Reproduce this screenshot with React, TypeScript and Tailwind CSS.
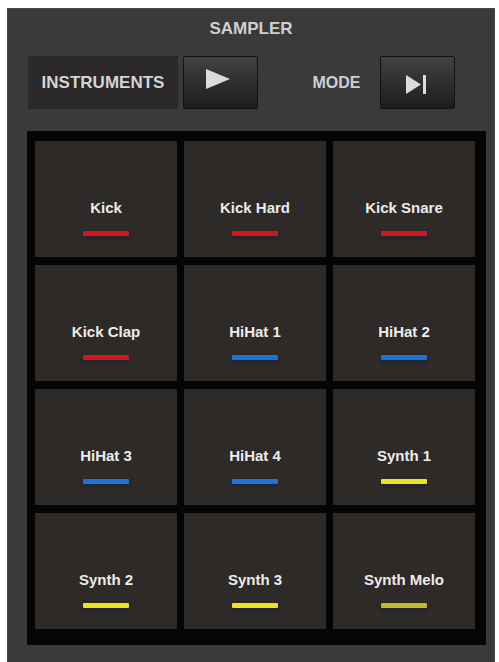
import React from "react";

const pads: { label: string; color: string }[] = [
  { label: "Kick", color: "bg-[#d4161c]" },
  { label: "Kick Hard", color: "bg-[#d4161c]" },
  { label: "Kick Snare", color: "bg-[#d4161c]" },
  { label: "Kick Clap", color: "bg-[#d4161c]" },
  { label: "HiHat 1", color: "bg-[#1d74d6]" },
  { label: "HiHat 2", color: "bg-[#1d74d6]" },
  { label: "HiHat 3", color: "bg-[#1d74d6]" },
  { label: "HiHat 4", color: "bg-[#1d74d6]" },
  { label: "Synth 1", color: "bg-[#ece524]" },
  { label: "Synth 2", color: "bg-[#ece524]" },
  { label: "Synth 3", color: "bg-[#ece524]" },
  { label: "Synth Melo", color: "bg-[#bdbb2c]" },
];

export default function App() {
  return (
    <div className="w-[499px] h-[662px] bg-white overflow-hidden font-['Liberation_Sans',Arial,sans-serif]">
      <div className="ml-[7px] mt-[8px] w-[488px] h-[654px] bg-[#3a3a3a] border-l border-t border-r border-[#474747] flex flex-col">
        <div className="pt-[10px] h-[30px] text-center text-[17px] leading-[20px] font-bold text-[#cfcfcf]">
          SAMPLER
        </div>
        <div className="mt-[17px] h-[53px] flex items-stretch pl-[20px]">
          <div className="w-[150px] bg-[#2a2828] flex items-center justify-center text-[17px] font-bold text-[#d4d4d4]">
            INSTRUMENTS
          </div>
          <button className="ml-[5px] w-[75px] rounded-[2px] border border-[#121212] bg-gradient-to-b from-[#424242] to-[#1d1d1d] flex items-center justify-center">
            <svg width="24" height="20" viewBox="0 0 24 20" className="-mt-[8px] -ml-[6px]">
              <polygon points="0,0 24,10 0,20" fill="#dcdcdc" />
            </svg>
          </button>
          <div className="ml-[54px] w-[49px] flex items-center justify-center text-[16px] font-bold text-[#cfcfcf]">
            MODE
          </div>
          <button className="ml-[19px] w-[75px] rounded-[2px] border border-[#121212] bg-gradient-to-b from-[#424242] to-[#1d1d1d] flex items-center justify-center">
            <svg width="22" height="19" viewBox="0 0 22 19" className="mt-[3px] -ml-[2px]">
              <polygon points="0,0 15,9.5 0,19" fill="#dcdcdc" />
              <rect x="17" y="0" width="3" height="19" fill="#dcdcdc" />
            </svg>
          </button>
        </div>
        <div className="mt-[22px] ml-[19px] w-[459px] h-[514px] bg-[#050505] pt-[10px] pl-[8px] pr-[11px] pb-[16px]">
          <div className="grid grid-cols-[142px_142px_142px] grid-rows-[116px_116px_116px_116px] gap-x-[7px] gap-y-[8px]">
            {pads.map((p) => (
              <div key={p.label} className="bg-[#2d2a28] flex flex-col items-center pt-[57px]">
                <div className="h-[20px] leading-[20px] text-[15px] font-bold text-[#ececec]">
                  {p.label}
                </div>
                <div className={`mt-[13px] w-[46px] h-[5px] rounded-[1px] ${p.color} shadow-[0_2px_3px_rgba(20,30,60,0.6)]`} />
              </div>
            ))}
          </div>
        </div>
      </div>
    </div>
  );
}
